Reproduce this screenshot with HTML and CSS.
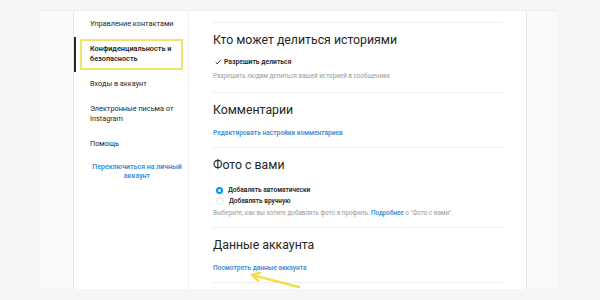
FILE: index.html
```html
<!DOCTYPE html>
<html lang="ru">

<head>
  <meta charset="UTF-8">
  <meta name="viewport" content="width=device-width, initial-scale=1.0">
  <title>Конфиденциальность и безопасность</title>
  <link rel="stylesheet" href="styles.css">
</head>

<body>

  <div class="frame">
    <div class="card">

      <nav class="sidebar">
        <a class="nav-item" href="#">Управление контактами</a>
        <a class="nav-item active" href="#">Конфиденциальность и безопасность</a>
        <a class="nav-item" href="#">Входы в аккаунт</a>
        <a class="nav-item" href="#">Электронные письма от Instagram</a>
        <a class="nav-item" href="#">Помощь</a>
        <a class="switch-link" href="#">Переключиться на личный аккаунт</a>
      </nav>

      <main class="settings">
        <section class="group">
          <h2>Кто может делиться историями</h2>
          <label class="check-row">
            <svg class="check" viewBox="0 0 10 10" width="6" height="6">
              <path d="M1 5.4 L3.8 8 L9 2" fill="none" stroke="#262626" stroke-width="1.6" />
            </svg>
            Разрешить делиться
          </label>
          <p class="hint">Разрешить людям делиться вашей историей в сообщениях</p>
        </section>

        <section class="group">
          <h2>Комментарии</h2>
          <a class="link" href="#">Редактировать настройки комментариев</a>
        </section>

        <section class="group">
          <h2>Фото с вами</h2>
          <div class="radio-list">
            <label class="radio-row"><span class="radio checked"></span>Добавлять автоматически</label>
            <label class="radio-row"><span class="radio"></span>Добавлять вручную</label>
          </div>
          <p class="hint">Выберите, как вы хотите добавлять фото в профиль. <a class="link" href="#">Подробнее</a> о "Фото с вами".</p>
        </section>

        <section class="group last">
          <h2>Данные аккаунта</h2>
          <a class="link" href="#">Посмотреть данные аккаунта</a>
        </section>

        <!-- yellow annotation arrow -->
        <svg class="arrow" viewBox="0 0 60 30" width="60" height="30">
          <path d="M6 10 L53 22" fill="none" stroke="#f2de4f" stroke-width="2.4" stroke-linecap="round" />
          <path d="M12.5 15.8 L6 10 L14 7.6" fill="none" stroke="#f2de4f" stroke-width="2.4" stroke-linecap="round" stroke-linejoin="round" />
        </svg>
      </main>

    </div>
  </div>

</body>

</html>
```

FILE: styles.css
```css
/* Settings page */
body {
  font-family: Roboto, 'Liberation Sans', sans-serif;
  background-color: #f7f5f5;
  margin: 0;
  padding: 10px 0 0 40px;
  color: #262626;
}

.frame {
  width: 517px;
  height: 278px;
  background-color: #fafafa;
  border-top: 1px solid #efeded;
}

.card {
  display: flex;
  width: 452px;
  height: 100%;
  margin-left: 33px;
  background-color: #fff;
  border-left: 1px solid #e6e6e6;
  border-right: 1px solid #e6e6e6;
}

.sidebar {
  width: 114px;
  flex-shrink: 0;
  border-right: 1px solid #efefef;
  display: flex;
  flex-direction: column;
  padding-top: 0.5px;
}

.nav-item {
  position: relative;
  display: block;
  padding: 7.5px 6px 7.5px 16px;
  font-size: 7.3px;
  line-height: 10px;
  color: #262626;
  text-decoration: none;
}

.nav-item.active {
  font-weight: 600;
  border-left: 2px solid #262626;
  padding-left: 14px;
}

/* highlight box from the screenshot */
.nav-item.active::after {
  content: "";
  position: absolute;
  left: 4px;
  right: 5px;
  top: 2px;
  bottom: 2px;
  border: 2px solid #f1e46c;
}

.switch-link {
  margin-top: 6px;
  padding: 0 4px 0 16px;
  text-align: center;
  font-size: 7px;
  line-height: 9px;
  font-weight: 600;
  color: #3b90d8;
  text-decoration: none;
}

.settings {
  position: relative;
  flex-grow: 1;
  padding: 11px 23px 0 24px;
}

.group {
  border-top: 1px solid #efefef;
  padding: 7px 0 8px;
  display: flex;
  flex-direction: column;
  align-items: flex-start;
}

.group:first-child {
  padding-bottom: 10px;
}

.group.last {
  border-bottom: 1px solid #efefef;
}

h2 {
  margin: 0 0 5px;
  font-size: 12.3px;
  line-height: 20px;
  font-weight: 400;
  color: #262626;
}

.check-row {
  display: flex;
  align-items: center;
  gap: 3px;
  margin-top: 1px;
  font-size: 6.8px;
  line-height: 12px;
  font-weight: 600;
}

.check {
  margin-left: 2px;
}

.hint {
  margin: 2px 0 0;
  font-size: 6.3px;
  line-height: 12px;
  color: #999;
}

.link {
  margin-top: 2px;
  font-size: 6.6px;
  line-height: 12px;
  font-weight: 600;
  color: #3b90d8;
  text-decoration: none;
}

.hint .link {
  margin: 0;
  font-size: 6.3px;
}

.radio-list {
  display: flex;
  flex-direction: column;
  margin-top: 4.5px;
}

.radio-list + .hint {
  margin-top: 0.5px;
}

.radio-row {
  display: flex;
  align-items: center;
  gap: 5px;
  font-size: 6.5px;
  line-height: 11px;
  font-weight: 600;
}

.radio {
  width: 3px;
  height: 3px;
  margin-left: 3px;
  border: 2.5px solid #0095f6;
  border-radius: 50%;
  background-color: #fff;
}

.radio:not(.checked) {
  border: 1px solid #e3e3e3;
  width: 6px;
  height: 6px;
}

.arrow {
  position: absolute;
  left: 57px;
  top: 254px;
}
```
